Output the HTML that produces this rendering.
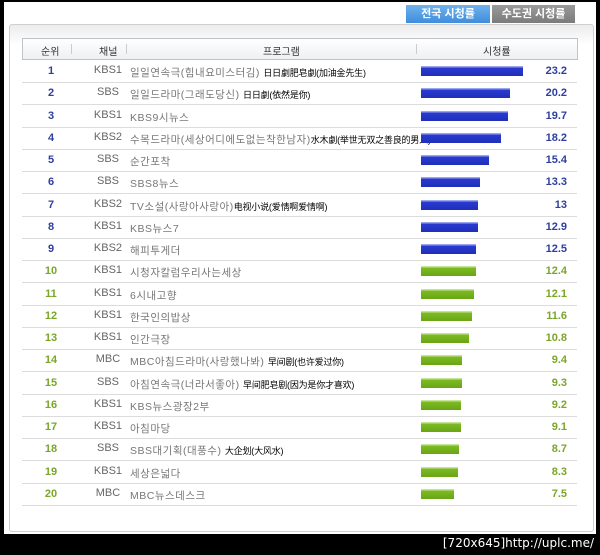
<!DOCTYPE html>
<html><head><meta charset="utf-8"><style>
body{margin:0;width:600px;height:555px;background:#000;position:relative;overflow:hidden;font-family:"Liberation Sans","Noto Sans CJK KR",sans-serif;}
.page{position:absolute;left:4px;top:2px;width:592px;height:532px;background:#fff;}
.box{position:absolute;left:5px;top:22px;width:583px;height:506px;border:1px solid #cfcfcf;border-radius:3px;background:linear-gradient(#ececec,#fff 20px);}
.tab{position:absolute;top:3px;height:18px;font-size:11px;font-weight:bold;color:#fff;text-align:center;line-height:18px;}
.hdr{position:absolute;left:22px;top:38px;width:554px;height:20px;border:1px solid #bfc3c8;background:linear-gradient(#fff,#eef0f2);font-size:10px;color:#333;}
.hdr span{position:absolute;top:4px;}
.sep{position:absolute;top:5px;width:1px;height:10px;background:#ccc;}
.row{position:absolute;left:22px;width:555px;height:22px;border-bottom:1px solid #dcdcdc;font-size:11px;color:#666;line-height:22px;}
.row span{position:absolute;top:0;}
.row .r{left:14px;width:30px;text-align:center;font-weight:bold;}
.row .c{left:60px;width:52px;text-align:center;top:-1px;}
.row .p{left:108px;top:2px;white-space:nowrap;font-size:10.5px;color:#777;letter-spacing:0.5px;}
.row .p small{font-size:9px;color:#000;letter-spacing:-0.2px;}
.row .b{position:absolute;left:399px;top:6px;height:10px;}
.row .v{right:10px;font-weight:bold;}
.bl .r,.bl .v{color:#2e3f9f}.bl .b{background:linear-gradient(#9aa6ee 0,#9aa6ee 1px,#2a3ad0 2px,#1f2fb8);}
.gr .r,.gr .v{color:#7aa62a}.gr .b{background:linear-gradient(#c7e39a 0,#c7e39a 1px,#7bbb22 2px,#6aa416);}
.foot{position:absolute;right:6px;top:536px;color:#fff;font-family:"DejaVu Sans",sans-serif;font-size:12px;}
</style></head><body>
<div class="page">
<div class="box"></div>
<div class="tab" style="left:402px;width:84px;background:linear-gradient(#6fb2ee,#3f8ddb);">전국 시청률</div>
<div class="tab" style="left:488px;width:83px;background:linear-gradient(#9a9a9a,#7b7b7b);">수도권 시청률</div>
</div>
<div class="hdr">
<span style="left:18px">순위</span><div class="sep" style="left:48px"></div>
<span style="left:76px">채널</span><div class="sep" style="left:103px"></div>
<span style="left:240px">프로그램</span><div class="sep" style="left:393px"></div>
<span style="left:460px">시청률</span>
</div>
<div id="rows"></div>
<div class="foot">[720x645]http://uplc.me/</div>
<script>
var d=[["KBS1","일일연속극(힘내요미스터김) <small>日日劇肥皂劇(加油金先生)</small>",23.2],
["SBS","일일드라마(그래도당신) <small>日日劇(依然是你)</small>",20.2],
["KBS1","KBS9시뉴스",19.7],
["KBS2","수목드라마(세상어디에도없는착한남자)<small>水木劇(举世无双之善良的男人)</small>",18.2],
["SBS","순간포착",15.4],["SBS","SBS8뉴스",13.3],
["KBS2","TV소설(사랑아사랑아)<small>电视小说(爱情啊爱情啊)</small>",13],
["KBS1","KBS뉴스7",12.9],["KBS2","해피투게더",12.5],
["KBS1","시청자칼럼우리사는세상",12.4],["KBS1","6시내고향",12.1],["KBS1","한국인의밥상",11.6],["KBS1","인간극장",10.8],
["MBC","MBC아침드라마(사랑했나봐) <small>早间剧(也许爱过你)</small>",9.4],
["SBS","아침연속극(너라서좋아) <small>早间肥皂剧(因为是你才喜欢)</small>",9.3],
["KBS1","KBS뉴스광장2부",9.2],["KBS1","아침마당",9.1],
["SBS","SBS대기획(대풍수) <small>大企划(大风水)</small>",8.7],
["KBS1","세상은넓다",8.3],["MBC","MBC뉴스데스크",7.5]];
var h="";
d.forEach(function(e,i){var t=60+i*22.25;
h+='<div class="row '+(i<9?'bl':'gr')+'" style="top:'+t.toFixed(1)+'px"><span class="r">'+(i+1)+'</span><span class="c">'+e[0]+'</span><span class="p">'+e[1]+'</span><div class="b" style="width:'+Math.round(e[2]*4.4)+'px"></div><span class="v">'+e[2]+'</span></div>';});
document.getElementById("rows").innerHTML=h;
</script>
</body></html>
